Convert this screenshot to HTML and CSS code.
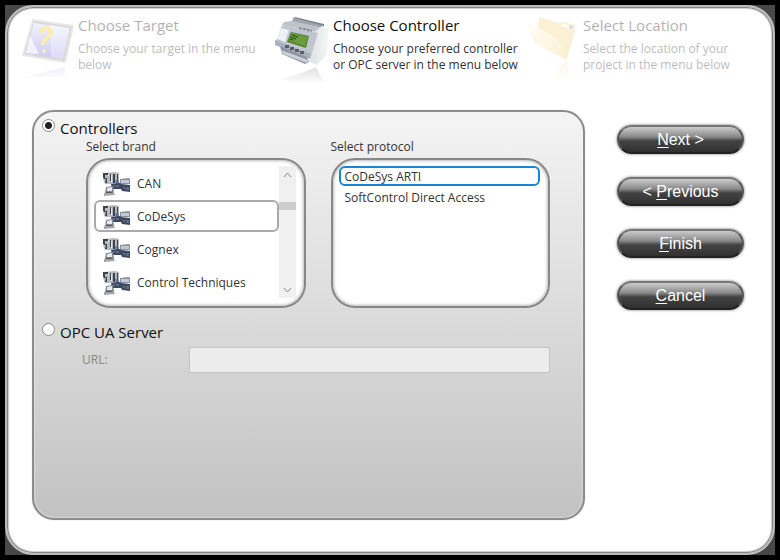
FILE: index.html
```html
<!DOCTYPE html>
<html lang="en">
<head>
    <meta charset="utf-8">
    <meta name="viewport" content="width=device-width">
    <title>Choose Controller</title>
    <link rel="stylesheet" href="styles.css">
</head>
<body>
    <svg class="defs" aria-hidden="true">
        <symbol id="devices" viewBox="0 0 28 24">
            <path d="M0 1l12-1 4 1v10l-3 1H2L0 7z" fill="#b6b9bf"/>
            <path d="M0 1h5v2H2v3H0zM1 6h3v1H1zM3 7h1v4H2z" fill="#3f434a"/>
            <path d="M7 2h1v7H7zM10 2h2v9h-2zM14 2h1v9h-1z" fill="#3f434a"/>
            <path d="M5 2h1v2H5zM8 3h1v7H8z" fill="#e4e6ea"/>
            <path d="M12 8l4 1v3h-3z" fill="#5a74ac"/>
            <path d="M17 7l9-1 1 1v5H17z" fill="#8a909c"/>
            <path d="M18 8h8v3h-8z" fill="#c3cad6"/>
            <path d="M8 12l9-1 1 1 9 1v7l-8-1-1-2H9z" fill="#3e495d"/>
            <path d="M10 13h2v2h-2zM13 13h3v2h-3zM20 15h2v2h-2zM23 15h3v3h-3z" fill="#5c6b87"/>
            <path d="M3 15l7-1 1 7H2z" fill="#858990"/>
            <path d="M4 16l5-1v4H4z" fill="#e6eaf0"/>
            <path d="M1 21h10l1 2-11 1z" fill="#a5a7ab"/>
            <path d="M3 20h6v1H3z" fill="#55575d"/>
        </symbol>
    </svg>
    <div class="window">
        <form class="frame">
            <header class="steps">
                <div class="step inactive">
                    <svg class="pic" viewBox="0 0 56 70" aria-hidden="true">
                        <defs>
                            <linearGradient id="screen" x1="0" y1="0" x2="0" y2="1">
                                <stop offset="0" stop-color="#d8d8fa"/>
                                <stop offset="1" stop-color="#6a5edc"/>
                            </linearGradient>
                            <linearGradient id="screenfade" x1="0" y1="0" x2="0" y2="1">
                                <stop offset="0" stop-color="#8b86d8" stop-opacity=".4"/>
                                <stop offset="1" stop-color="#8b86d8" stop-opacity="0"/>
                            </linearGradient>
                        </defs>
                        <path d="M13 5l40 6-8 36-42-7z" fill="#888" stroke="#bbb" stroke-width="2" stroke-linejoin="round"/>
                        <path d="M14 8l36 5-7 31-37-6z" fill="url(#screen)"/>
                        <path d="M30 10l20 3-7 31-12-2z" fill="#fff" opacity=".35"/>
                        <path d="M10 21l9 18-13-1z" fill="#fff" opacity=".7"/>
                        <path d="M21 18c2-7 11-6 10 0-1 5-8 5-8 12" fill="none" stroke="#eec911" stroke-width="4"/>
                        <circle cx="24" cy="36" r="2" fill="#eec911"/>
                        <path d="M3 62l42-10-1 12q-20-5-41 1z" fill="url(#screenfade)"/>
                    </svg>
                    <div>
                        <h2>Choose Target</h2>
                        <p>Choose your target in the menu below</p>
                    </div>
                </div>
                <div class="step">
                    <svg class="pic" viewBox="0 0 56 70" aria-hidden="true">
                        <defs>
                            <linearGradient id="side" x1="0" y1="0" x2="1" y2="0">
                                <stop offset="0" stop-color="#dde2e2"/>
                                <stop offset="1" stop-color="#f5f8f7"/>
                            </linearGradient>
                            <linearGradient id="plcfade" x1="0" y1="0" x2="0" y2="1">
                                <stop offset="0" stop-color="#999" stop-opacity=".3"/>
                                <stop offset="1" stop-color="#999" stop-opacity="0"/>
                            </linearGradient>
                        </defs>
                        <path d="M18 3l31 7v3l-32-6z" fill="#9ea5ab"/>
                        <path d="M18 3l2-1 29 7v2z" fill="#7f878e"/>
                        <path d="M17 6l31 7-3 5-38-8 2-3z" fill="#bcc3c9"/>
                        <path d="M38 18l9-7 7 2-2 27-10 10-7-3z" fill="url(#side)"/>
                        <path d="M7 10l36 8-8 26L0 29z" fill="#bfc6d0"/>
                        <path d="M6 13l8 2-4 12-8-3z" fill="#eef0f4"/>
                        <path d="M0 25l36 14-1 5L0 30z" fill="#a9b1bd"/>
                        <path d="M5 31l27 11 2 5-4 2L7 39z" fill="#8d96a1"/>
                        <path d="M6 35l27 10-1 3L8 39z" fill="#cbd1d7"/>
                        <path d="M16 17l18 4-3 12-19-6z" fill="#55822f"/>
                        <path d="M17 18l16 4-3 9-16-5z" fill="#6a9c3a"/>
                        <path d="M17 20l6 2M16 22l5 2M15 24l3 1" stroke="#233f1c"/>
                        <path d="M10 30h4v3h-4zM15 32h4v3h-4zM20 34h4v3h-4zM25 36h4v3h-4z" fill="#565e6e"/>
                        <path d="M24 13l13 3" stroke="#848c94" stroke-width="2" stroke-dasharray="3 1"/>
                        <path d="M7 64q20-5 34-12l9 16-10 1-12-3-8 2z" fill="url(#plcfade)"/>
                    </svg>
                    <div>
                        <h2>Choose Controller</h2>
                        <p>Choose your preferred controller or OPC server in the menu below</p>
                    </div>
                </div>
                <div class="step inactive">
                    <svg class="pic" viewBox="0 0 56 70" aria-hidden="true">
                        <defs>
                            <linearGradient id="flap" x1="1" y1="1" x2="0" y2="0">
                                <stop offset="0" stop-color="#f3d476"/>
                                <stop offset="1" stop-color="#fffbee"/>
                            </linearGradient>
                            <linearGradient id="folderfade" x1="0" y1="0" x2="0" y2="1">
                                <stop offset="0" stop-color="#eccf68" stop-opacity=".5"/>
                                <stop offset="1" stop-color="#eccf68" stop-opacity="0"/>
                            </linearGradient>
                        </defs>
                        <path d="M14 2l20 6 4-1 12 3v6l-8 28L12 19z" fill="#f3d47c"/>
                        <path d="M36 8l12 3-1 3-11-3z" fill="#fff6d7"/>
                        <circle cx="46" cy="12" r="2" fill="#7899a5"/>
                        <path d="M1 7l27 14q8 4 14 24L9 28z" fill="url(#flap)"/>
                        <path d="M42 44l2 21H25z" fill="url(#folderfade)"/>
                    </svg>
                    <div>
                        <h2>Select Location</h2>
                        <p>Select the location of your project in the menu below</p>
                    </div>
                </div>
            </header>
            <main class="content">
                <section class="panel">
                    <div class="source">
                        <input type="radio" id="source0" name="source" checked><label for="source0">Controllers</label>
                    </div>
                    <div class="lists">
                        <div class="column">
                            <h3 id="brands">Select brand</h3>
                            <div class="list">
                                <ul class="brands" aria-labelledby="brands">
                                    <li><input type="radio" id="brand0" name="brand"><label for="brand0"><svg class="device" aria-hidden="true"><use href="#devices"/></svg>CAN</label></li>
                                    <li><input type="radio" id="brand1" name="brand" checked><label for="brand1"><svg class="device" aria-hidden="true"><use href="#devices"/></svg>CoDeSys</label></li>
                                    <li><input type="radio" id="brand2" name="brand"><label for="brand2"><svg class="device" aria-hidden="true"><use href="#devices"/></svg>Cognex</label></li>
                                    <li><input type="radio" id="brand3" name="brand"><label for="brand3"><svg class="device" aria-hidden="true"><use href="#devices"/></svg>Control Techniques</label></li>
                                </ul>
                                <div class="scrollbar">
                                    <button type="button" aria-label="Scroll up"><svg viewBox="0 0 9 6"><path d="M1 5l3.500-4L8 5"/></svg></button>
                                    <div class="track"><div class="thumb"></div></div>
                                    <button type="button" aria-label="Scroll down"><svg viewBox="0 0 9 6"><path d="M1 1l3.500 4L8 1"/></svg></button>
                                </div>
                            </div>
                        </div>
                        <div class="column">
                            <h3 id="protocols">Select protocol</h3>
                            <div class="list">
                                <ul class="protocols" aria-labelledby="protocols">
                                    <li><input type="radio" id="protocol0" name="protocol" checked><label for="protocol0">CoDeSys ARTI</label></li>
                                    <li><input type="radio" id="protocol1" name="protocol"><label for="protocol1">SoftControl Direct Access</label></li>
                                </ul>
                            </div>
                        </div>
                    </div>
                    <div class="source">
                        <input type="radio" id="source1" name="source"><label for="source1">OPC UA Server</label>
                    </div>
                    <div class="url">
                        <label for="url">URL:</label>
                        <input type="text" id="url" disabled>
                    </div>
                </section>
                <nav class="buttons">
                    <button type="button"><u>N</u>ext &gt;</button>
                    <button type="button">&lt; <u>P</u>revious</button>
                    <button type="button"><u>F</u>inish</button>
                    <button type="button"><u>C</u>ancel</button>
                </nav>
            </main>
        </form>
    </div>
</body>
</html>
```

FILE: styles.css
```css
* {box-sizing: border-box}
body {
    margin: 0;
    padding: 5px;
    background: #000;
    color: #333;
    font: 12px/16px "Open Sans", "Noto Sans", sans-serif;
}
h2, h3, p, ul {margin: 0; padding: 0; font-weight: normal}
ul {list-style: none}
.defs {display: none}
.window {background: #484848}
.frame {
    display: flex;
    flex-direction: column;
    min-height: calc(100vh - 10px);
    border: 2px solid #bbb;
    border-radius: 28px;
    background: #fff;
    box-shadow: inset 0 0 0 1px #848484, inset 0 0 1px 2px #ccc;
}

/* wizard steps */
.steps {
    display: grid;
    grid-template-columns: 255fr 250fr 240fr;
    height: 103px;
    padding: 8px 8px 0 13px;
}
.step {display: flex; gap: 2px}
.step p {max-width: 190px}
.inactive {opacity: .33}
.pic {flex: none; width: 56px; height: 70px}
h2 {
    margin-bottom: 6px;
    color: #111;
    font-size: 15px;
    line-height: 20px;
}

.content {
    display: flex;
    flex: 1;
    gap: 32px;
    padding: 0 29px 33px 25px;
}
.panel {
    flex: 1;
    padding: 6px 33px 0 8px;
    border: 2px solid #8c8c8c;
    border-radius: 22px;
    background: linear-gradient(#f4f4f4, #c2c2c2);
    box-shadow: 0 0 1px #aaa, inset 0 0 2px 1px rgba(255, 255, 255, .3);
}
.source {
    display: flex;
    gap: 5px;
    color: #111;
    font-size: 15px;
    line-height: 20px;
}
.source input {
    appearance: none;
    width: 13px;
    height: 13px;
    margin: 1px 0 0;
    border: 1px solid #888;
    border-radius: 50%;
    background: #fff;
}
.source input:checked {background: radial-gradient(#222 3px, #fff 4px)}

.lists {
    display: flex;
    gap: 25px;
    margin: 0 0 14px 44px;
}
.column {flex: 1}
h3 {
    padding: 1px 0 3px;
    font-size: 12px;
}
.list {
    display: flex;
    height: 150px;
    padding: 6px 8px 6px 6px;
    border: 2px solid #888;
    border-radius: 24px;
    background: #fff;
    box-shadow: inset 0 0 3px 1px #bbb;
}
.list ul {
    display: flex;
    flex-direction: column;
    flex: 1;
    gap: 1px;
}
.list input {position: absolute; opacity: 0}
.list label {
    display: flex;
    align-items: center;
    padding-top: 2px;
    border: 2px solid transparent;
    border-radius: 6px;
}
.brands {padding-top: 1px}
.brands label {height: 32px; padding-left: 7px}
.brands input:checked + label {border-color: #aaa}
.protocols label {height: 20px; padding-left: 4px}
.protocols input:checked + label {border-color: #1883d7}
.device {width: 28px; height: 24px; margin-right: 6px}

.scrollbar {
    display: flex;
    flex-direction: column;
    width: 17px;
    height: 132px;
    background: #f0f0f0;
}
.scrollbar button {
    height: 17px;
    padding: 0;
    border: 0;
    background: none;
}
.scrollbar svg {
    display: block;
    width: 9px;
    height: 6px;
    margin: auto;
    fill: none;
    stroke: #888;
}
.track {flex: 1; padding-top: 19px}
.thumb {height: 8px; background: #cdcdcd}

.url {
    display: flex;
    align-items: center;
    margin: 5px 0 0 40px;
    color: #888;
}
.url label {width: 107px}
.url input {
    flex: 1;
    height: 26px;
    border: 1px solid #c4c4c4;
    background: #ececec;
}

.buttons {
    display: flex;
    flex-direction: column;
    gap: 23px;
    width: 127px;
    padding-top: 15px;
}
.buttons button {
    height: 29px;
    padding: 0;
    border: 2px solid #555;
    border-color: #777 #555 #222;
    border-radius: 15px;
    background: linear-gradient(#ccc, #888 40%, #444 55%, #303030);
    box-shadow: 0 0 2px 1px #bbb;
    color: #fff;
    font: 16px/20px "Liberation Sans", Arial, sans-serif;
}
u {text-underline-offset: 2px}
```
